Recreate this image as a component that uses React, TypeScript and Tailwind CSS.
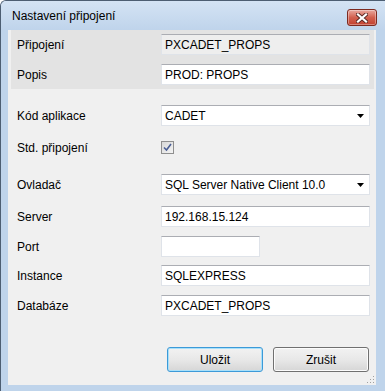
import React from "react";

const label = "text-[12px] leading-none text-black";

function TextBox({ value, width = "w-[209px]", readOnly = false, combo = false }: { value: string; width?: string; readOnly?: boolean; combo?: boolean }) {
  return (
    <div
      className={`${width} h-[21px] flex items-center pl-[3px] pr-[5px] border border-[#dfe3e9] border-t-[#abadb3] ${
        readOnly ? "bg-[#eeeeee]" : "bg-white"
      }`}
    >
      <span className="flex-1 text-[12px] leading-none text-black whitespace-nowrap">{value}</span>
      {combo && (
        <svg width="7" height="4" viewBox="0 0 7 4">
          <path d="M0 0 H7 L3.5 4 Z" fill="#000" />
        </svg>
      )}
    </div>
  );
}

function Row({ name, children, className = "" }: { name: string; children: React.ReactNode; className?: string }) {
  return (
    <div className={`flex items-center ${className}`}>
      <div className={`w-[144px] ${label}`}>{name}</div>
      {children}
    </div>
  );
}

export default function App() {
  return (
    <div className="w-[385px] h-[391px] bg-[#bfd4eb] border-l border-t border-[#4d5e72] rounded-tl-[6px] flex flex-col font-['Liberation_Sans',Arial,sans-serif] overflow-hidden">
      {/* Title bar */}
      <div className="h-[29px] flex items-start justify-between pl-[11px] pr-[8px] bg-gradient-to-b from-[#d4e3f4] to-[#bfd4eb]">
        <span className="mt-[8px] text-[12px] leading-[15px] text-black">Nastavení připojení</span>
        <button className="mt-[8px] w-[30px] h-[17px] rounded-[3px] border border-[#7d2a20] bg-gradient-to-b from-[#e8a89f] via-[#d2604f] to-[#c2412f] flex items-center justify-center shadow-[inset_0_0_0_1px_rgba(255,255,255,0.35)]">
          <svg width="12" height="10" viewBox="0 0 12 10">
            <path d="M2 1.5 L10 8.5 M10 1.5 L2 8.5" stroke="#5a2a26" strokeWidth="4" strokeLinecap="square" />
            <path d="M2 1.5 L10 8.5 M10 1.5 L2 8.5" stroke="#ffffff" strokeWidth="2.2" strokeLinecap="square" />
          </svg>
        </button>
      </div>

      {/* Client area */}
      <div className="relative ml-[7px] w-[368px] h-[355px] bg-[#f0f0f0] flex flex-col">
        {/* Top panel */}
        <div className="ml-[3px] w-[363px] h-[59px] bg-[#e3e3e3] pl-[6px] pt-[4px] flex flex-col gap-[9px]">
          <Row name="Připojení">
            <TextBox value="PXCADET_PROPS" readOnly />
          </Row>
          <Row name="Popis">
            <TextBox value="PROD: PROPS" />
          </Row>
        </div>

        <div className="pl-[9px] flex flex-col">
          <Row name="Kód aplikace" className="mt-[16px]">
            <TextBox value="CADET" combo />
          </Row>
          <Row name="Std. připojení" className="mt-[11px] h-[21px]">
            <div className="w-[13px] h-[13px] border border-[#8f8f8f] bg-gradient-to-br from-[#d8d8d8] to-[#f4f4f4] flex items-center justify-center">
              <svg width="9" height="9" viewBox="0 0 9 9">
                <path d="M1 4.5 L3.5 7 L8 1" stroke="#4a5e94" strokeWidth="1.6" fill="none" />
              </svg>
            </div>
          </Row>
          <Row name="Ovladač" className="mt-[16px]">
            <TextBox value="SQL Server Native Client 10.0" combo />
          </Row>
          <Row name="Server" className="mt-[11px]">
            <TextBox value="192.168.15.124" />
          </Row>
          <Row name="Port" className="mt-[9px]">
            <TextBox value="" width="w-[99px]" />
          </Row>
          <Row name="Instance" className="mt-[8px]">
            <TextBox value="SQLEXPRESS" />
          </Row>
          <Row name="Databáze" className="mt-[9px]">
            <TextBox value="PXCADET_PROPS" />
          </Row>
        </div>

        {/* Buttons */}
        <div className="mt-[31px] pr-[7px] flex justify-end gap-[10px]">
          <button className="w-[96px] h-[25px] rounded-[3px] border border-[#3c9ad8] shadow-[inset_0_0_0_1px_#a8e0fa] bg-gradient-to-b from-[#f2f2f2] via-[#e8e8e8] to-[#d6d6d6] text-[12px] text-black">
            Uložit
          </button>
          <button className="w-[96px] h-[25px] rounded-[3px] border border-[#707070] shadow-[inset_0_0_0_1px_#fcfcfc] bg-gradient-to-b from-[#f2f2f2] via-[#e8e8e8] to-[#d6d6d6] text-[12px] text-black">
            Zrušit
          </button>
        </div>

        {/* Resize grip */}
        <svg className="absolute right-[1px] bottom-[1px]" width="9" height="9" viewBox="0 0 9 9">
          {[
            [7, 1],
            [4, 4],
            [7, 4],
            [1, 7],
            [4, 7],
            [7, 7],
          ].map(([x, y]) => (
            <rect key={`${x}-${y}`} x={x} y={y} width="1" height="1" fill="#a0a0a0" />
          ))}
        </svg>
      </div>
    </div>
  );
}
